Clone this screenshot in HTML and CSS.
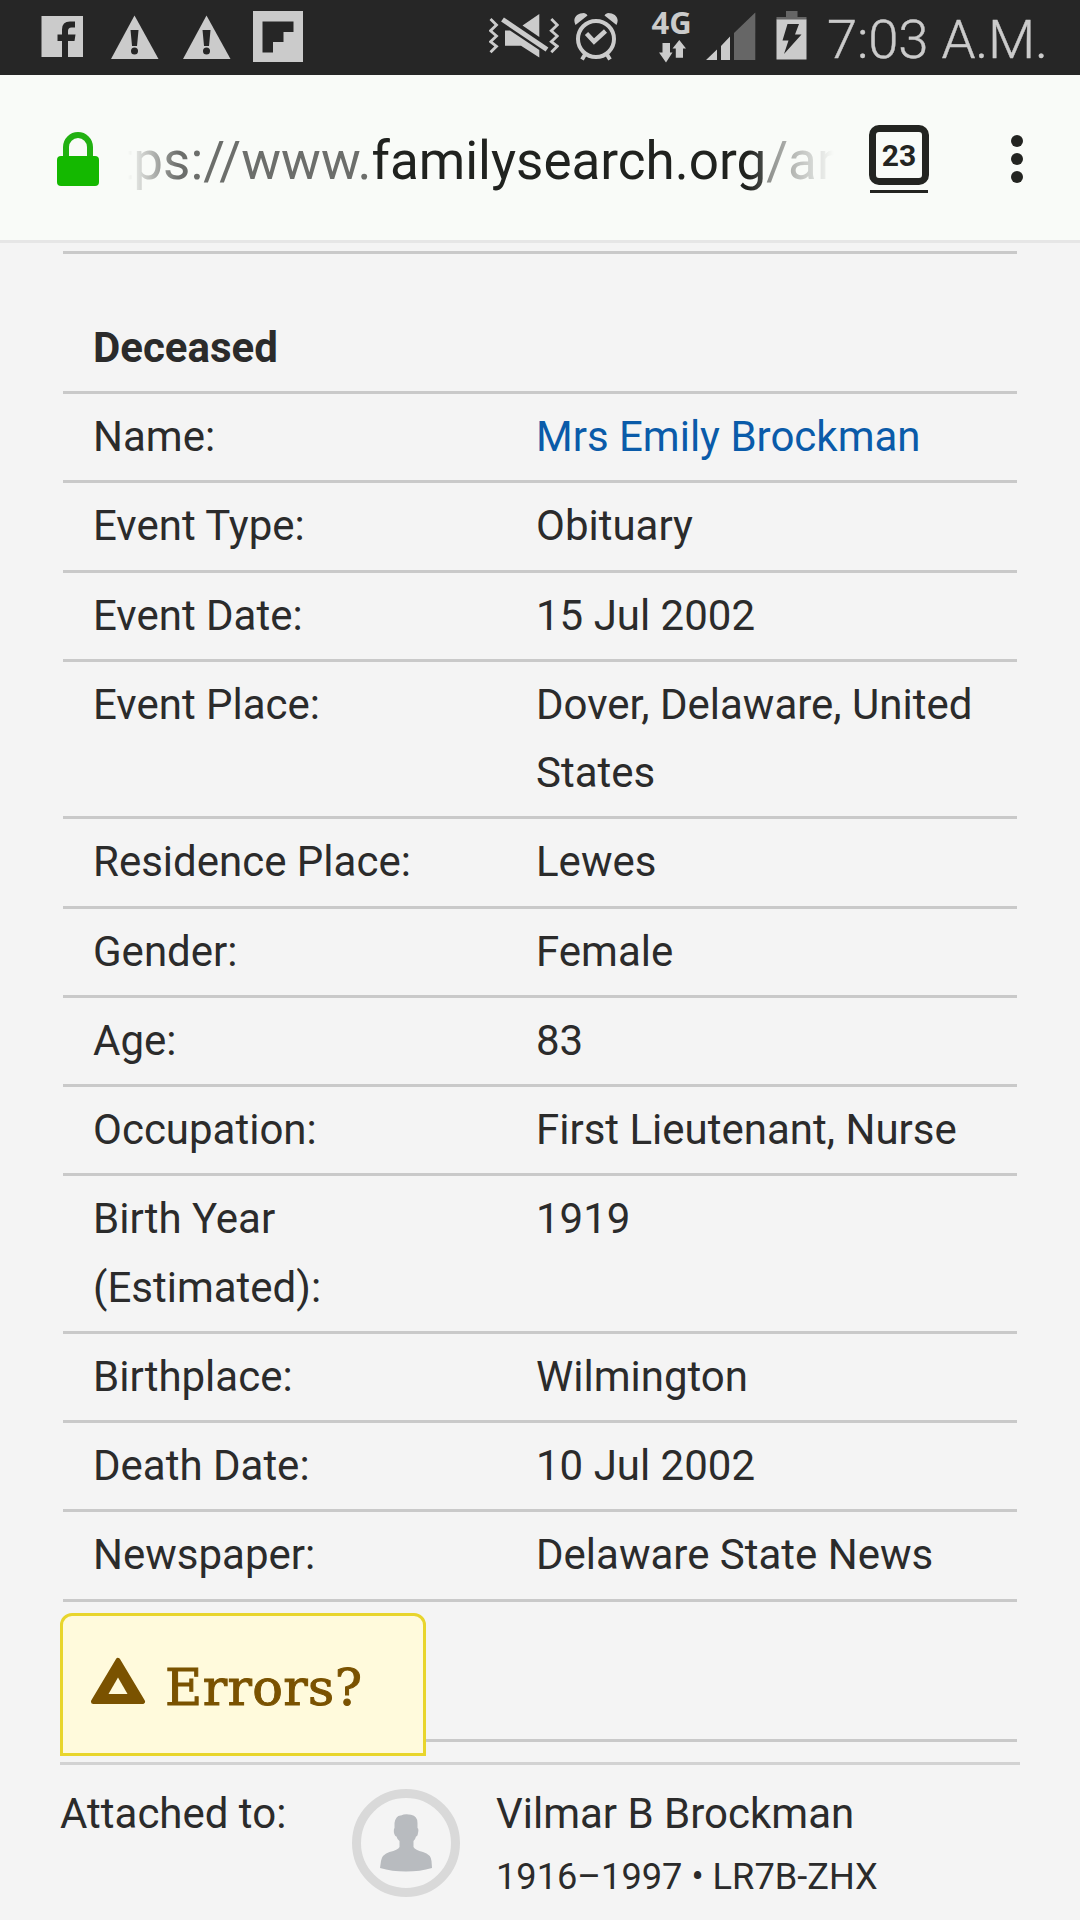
FILE: index.html
```html
<!DOCTYPE html>
<html lang="en">
<head>
    <meta charset="UTF-8">
    <meta name="viewport" content="width=device-width, initial-scale=1.0">
    <title>Mrs Emily Brockman - FamilySearch</title>
    <link rel="stylesheet" href="styles.css">
</head>
<body>
    <div class="status-bar">
        <svg class="icon-facebook" width="42" height="75" viewBox="41 0 42 75">
            <path fill="#cbcbcb" d="M41.500 16H83V57H68V41h6.500l1-6.500H68V31q0-3.500 3.500-3.500H75V21.500H70Q62 21.500 62 29.500V34.500H57.500V41H62V57H41.500Z"/>
        </svg>
        <svg class="icon-warning" width="48" height="75" viewBox="111 0 48 75">
            <path fill="#cbcbcb" d="M134.500 15.500L158.500 59H111Z"/>
            <path fill="#262626" d="M130.500 30h8l-1.500 16h-5Z"/>
            <circle cx="134.500" cy="51" r="3.500" fill="#262626"/>
        </svg>
        <svg class="icon-warning second" width="48" height="75" viewBox="111 0 48 75">
            <path fill="#cbcbcb" d="M134.500 15.500L158.500 59H111Z"/>
            <path fill="#262626" d="M130.500 30h8l-1.500 16h-5Z"/>
            <circle cx="134.500" cy="51" r="3.500" fill="#262626"/>
        </svg>
        <svg class="icon-flipboard" width="50" height="75" viewBox="253 0 50 75">
            <path fill="#cbcbcb" d="M253 11h50v51h-50Z"/>
            <path fill="#262626" d="M262.500 21.500H293.500V32H283.500V42H273V52.500H262.500Z"/>
        </svg>

        <div class="status-right">
            <svg width="70" height="75" viewBox="489 0 70 75">
                <g fill="none" stroke="#cbcbcb">
                    <path stroke-width="2.800" d="M490.500 19l6 6-6 5.700 6 5.300-6 5.700 6 4.600-6 6"/>
                    <path stroke-width="2.800" d="M551.300 19l6 6-6 5.700 6 5.300-6 5.700 6 4.600-6 6"/>
                    <path stroke-width="5" d="M502.500 19.500L547 49.500"/>
                </g>
                <path fill="#cbcbcb" d="M522.500 25.500L539.300 14V37ZM505 30.500H510L539.300 50V57.500L521 45.700H505Z"/>
            </svg>
            <svg class="icon-alarm" width="46" height="75" viewBox="573 0 46 75">
                <g fill="none" stroke="#cbcbcb">
                    <circle cx="596" cy="39" r="18" stroke-width="4"/>
                    <path stroke-width="4.500" d="M586.500 33.500L594 41.500L605.500 31"/>
                    <path stroke-width="4" d="M585 54.500l-3 5M607 54.500l3 5"/>
                </g>
                <path fill="#cbcbcb" d="M575.500 25C572 18 577 13 584 13Q587 13.500 587.500 15.500ZM616.500 25C620 18 615 13 608 13Q605 13.500 604.500 15.500Z"/>
            </svg>
            <svg class="icon-network" width="42" height="75" viewBox="650 0 42 75">
                <text class="network-text" x="651.500" y="33.500">4G</text>
                <path fill="#cbcbcb" d="M662.500 43H670V52.500H672.500L666 62.500L659 52.500H662.500ZM679.300 40L686 48.500H683V57.700H675.800V48.500H672.500Z"/>
            </svg>
            <svg class="icon-signal" width="50" height="75" viewBox="706 0 50 75">
                <path fill="#cbcbcb" d="M706 60L717 49.500V60ZM721 60V46L730 36.500V60Z"/>
                <path fill="#666" d="M734 60V33L755.300 12.500V60Z"/>
            </svg>
            <svg class="icon-battery" width="31" height="75" viewBox="775.500 0 31 75">
                <path fill="#666" d="M785.500 11h11.500v6h9v3H776V17h9.500Z"/>
                <path fill="#cbcbcb" d="M776 19.500h30v40H776Z"/>
                <path fill="#262626" d="M787 24H798.500L794.500 34.500H801L783.500 54L788 40.500H782Z"/>
            </svg>
            <span class="clock">7:03 A.M.</span>
        </div>
    </div>

    <div class="address-bar">
        <svg width="44" height="56" viewBox="56 131 44 56">
            <path fill="none" stroke="#22b112" stroke-width="6" d="M66 158V147a12 12 0 0 1 24 0V158"/>
            <rect x="57" y="156" width="42" height="30" rx="4" fill="#14b800"/>
        </svg>
        <div class="url">
            <span class="url-text">tps://www.<b>familysearch.org</b>/ar</span>
        </div>
        <div class="tabs">
            <div class="tab-count">23</div>
            <div class="tab-stack"></div>
        </div>
        <svg class="menu" width="12" height="48" viewBox="0 0 12 48">
            <g fill="#232421">
                <circle cx="6" cy="6" r="6"/>
                <circle cx="6" cy="24" r="6"/>
                <circle cx="6" cy="42" r="6"/>
            </g>
        </svg>
    </div>

    <div class="record">
        <h2 class="record-title">Deceased</h2>
        <div class="record-row">
            <div class="label">Name:</div>
            <div class="value"><a href="#">Mrs Emily Brockman</a></div>
        </div>
        <div class="record-row">
            <div class="label">Event Type:</div>
            <div class="value">Obituary</div>
        </div>
        <div class="record-row">
            <div class="label">Event Date:</div>
            <div class="value">15 Jul 2002</div>
        </div>
        <div class="record-row">
            <div class="label">Event Place:</div>
            <div class="value">Dover, Delaware, United States</div>
        </div>
        <div class="record-row">
            <div class="label">Residence Place:</div>
            <div class="value">Lewes</div>
        </div>
        <div class="record-row">
            <div class="label">Gender:</div>
            <div class="value">Female</div>
        </div>
        <div class="record-row">
            <div class="label">Age:</div>
            <div class="value">83</div>
        </div>
        <div class="record-row">
            <div class="label">Occupation:</div>
            <div class="value">First Lieutenant, Nurse</div>
        </div>
        <div class="record-row">
            <div class="label">Birth Year (Estimated):</div>
            <div class="value">1919</div>
        </div>
        <div class="record-row">
            <div class="label">Birthplace:</div>
            <div class="value">Wilmington</div>
        </div>
        <div class="record-row">
            <div class="label">Death Date:</div>
            <div class="value">10 Jul 2002</div>
        </div>
        <div class="record-row">
            <div class="label">Newspaper:</div>
            <div class="value">Delaware State News</div>
        </div>
        <div class="errors-row">
            <div class="errors">
                <svg width="56" height="48" viewBox="0 0 56 48">
                    <path fill="#7a5200" stroke="#7a5200" stroke-width="5" stroke-linejoin="round" d="M28 3.500L52.500 44.500H3.500Z"/>
                    <path fill="#fffadc" d="M28 20.500L37.500 37H18.500Z"/>
                </svg>
                <span>Errors?</span>
            </div>
        </div>
    </div>

    <div class="attached">
        <div class="attached-label">Attached to:</div>
        <div class="avatar">
            <svg width="52" height="58" viewBox="0 0 52 58">
                <path fill="#b8bbbf" d="M14.500 9Q16 1 21 1.500Q25-.5 31 .8Q37.500 2 37.500 9V14Q39 15 38 19Q37.500 22.500 36 22.500Q35.500 25 33.500 27V33Q35 36 43 38Q51 40.500 51.500 47L52 54Q40 57.500 26 57.500Q12 57.500 0 54L1 47Q2 40.500 9.500 38Q18 36 19.500 33V27Q17 25 16.500 22.500Q15 22.500 14 19Q13.500 15 14.500 14Z"/>
            </svg>
        </div>
        <div class="person">
            <div class="person-name">Vilmar B Brockman</div>
            <div class="person-info">1916–1997 • LR7B-ZHX</div>
        </div>
    </div>
</body>
</html>
```

FILE: styles.css
```css
* {
    margin: 0;
    padding: 0;
    box-sizing: border-box;
}

body {
    background-color: #f4f4f4;
    font-family: Roboto, sans-serif;
    font-size: 42px;
    line-height: 68.25px;
    color: #2b2b2b;
    height: 1920px;
    overflow: hidden;
}

svg {
    display: block;
    flex-shrink: 0;
}

/* status bar */
.status-bar {
    display: flex;
    height: 75px;
    padding: 0 34px 0 41px;
    background-color: #262626;
}

.icon-warning {
    margin-left: 28px;
}

.icon-warning.second {
    margin-left: 24px;
}

.icon-flipboard {
    margin-left: 22px;
}

.status-right {
    display: flex;
    margin-left: 186px;
}

.icon-alarm {
    margin-left: 14px;
}

.icon-network {
    margin-left: 31px;
}

.network-text {
    font-family: "Open Sans", sans-serif;
    font-size: 31px;
    font-weight: bold;
    fill: #cbcbcb;
}

.icon-signal {
    margin-left: 14px;
}

.icon-battery {
    margin-left: 20px;
}

.clock {
    margin-left: 20px;
    font-size: 54.5px;
    font-weight: 300;
    line-height: 78px;
    letter-spacing: -0.2px;
    white-space: nowrap;
    color: #cbcbcb;
    -webkit-text-stroke: 0.4px #cbcbcb;
}

/* address bar */
.address-bar {
    display: flex;
    align-items: flex-start;
    height: 168px;
    padding: 50px 57px 0 56px;
    background-color: #f9fbf8;
    border-bottom: 3px solid #e6e6e6;
}

.address-bar > svg:first-child {
    margin-top: 6px;
}

.url {
    width: 706px;
    margin-left: 28px;
    overflow: hidden;
    font-size: 53px;
    line-height: 72px;
    white-space: nowrap;
    color: #6c6e6b;
    -webkit-mask-image: linear-gradient(to right, transparent, #000 50px, #000 620px, transparent);
    mask-image: linear-gradient(to right, transparent, #000 50px, #000 620px, transparent);
}

.url-text {
    margin-left: -12px;
}

.url b {
    font-weight: normal;
    color: #20221f;
}

.tabs {
    margin-left: 35px;
}

.tab-count {
    width: 60px;
    height: 60px;
    border: 7px solid #232421;
    border-radius: 10px;
    font-size: 30px;
    font-weight: bold;
    line-height: 47px;
    text-align: center;
    color: #232421;
}

.tab-stack {
    height: 3px;
    margin: 5px 1px 0;
    background-color: #232421;
}

.menu {
    margin: 10px 0 0 82px;
}

/* record details */
.record {
    margin: 8px 63px 0;
    border-top: 3px solid #c9c9c9;
}

.record-title {
    height: 140px;
    padding: 60px 30px 0;
    font-size: 42px;
    line-height: 68.25px;
    border-bottom: 3px solid #c9c9c9;
}

.record-row {
    display: flex;
    padding: 9px 30px;
    border-bottom: 3px solid #c9c9c9;
}

.label {
    width: 443px;
    padding-right: 60px;
}

.value {
    flex: 1;
}

.value a {
    color: #0a5ba9;
    text-decoration: none;
}

.errors-row {
    height: 140px;
    padding-top: 11px;
    margin-left: -3px;
    background: linear-gradient(#c9c9c9, #c9c9c9) right bottom / calc(100% - 3px) 3px no-repeat;
}

.errors {
    display: flex;
    width: 366px;
    height: 143px;
    padding: 41px 0 0 27px;
    background-color: #fffadc;
    border: 3px solid #e8d52c;
    border-radius: 12px 12px 0 0;
    font-family: "DejaVu Serif", serif;
    font-size: 51px;
    line-height: 62px;
    letter-spacing: 0.4px;
    color: #7a5200;
    -webkit-text-stroke: 1px #7a5200;
}

.errors svg {
    -webkit-text-stroke: 0;
}

.errors span {
    margin-left: 19px;
}

/* attached person */
.attached {
    display: flex;
    margin: 20px 60px 0;
    padding-top: 15px;
    border-top: 3px solid #d2d2d2;
}

.attached-label {
    width: 292px;
}

.avatar {
    display: flex;
    justify-content: center;
    align-items: center;
    width: 108px;
    height: 108px;
    margin-top: 9px;
    border: 9px solid #d9d9d9;
    border-radius: 50%;
}

.person {
    margin-left: 36px;
}

.person-info {
    margin-top: -5px;
    font-size: 36.2px;
}
```
